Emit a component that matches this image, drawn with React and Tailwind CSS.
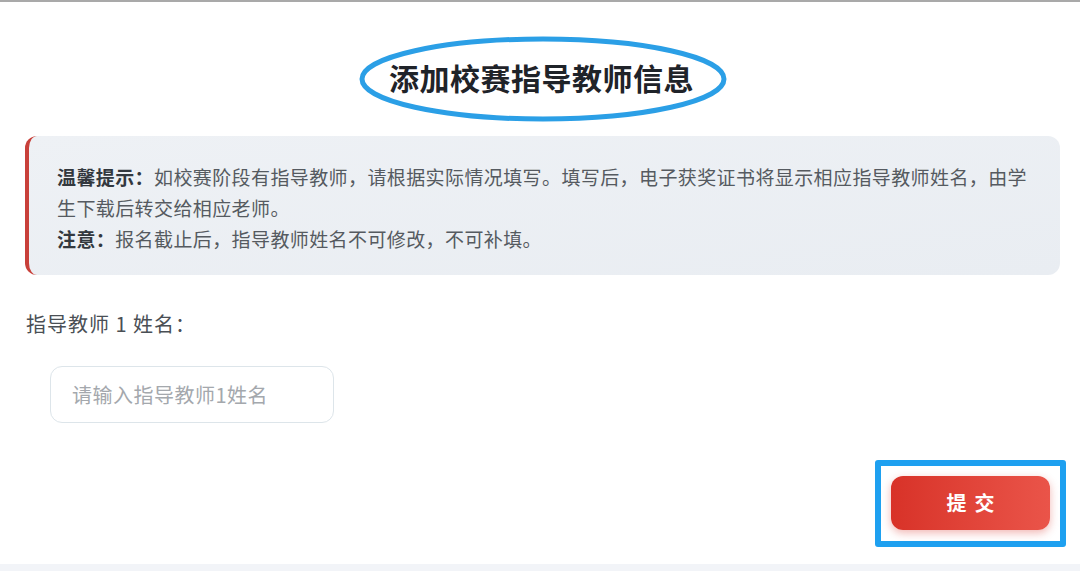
import React from "react";

const cjk = { fontFamily: '"Noto Sans CJK SC", "Noto Sans", sans-serif' };

function App() {
  return (
    <div className="w-[1080px] h-[571px] bg-white border-t-2 border-[#a9a9a9] flex flex-col overflow-hidden" style={cjk}>
      <div className="flex justify-center pt-[55px]">
        <div className="relative">
          <h1 className="text-[30px] leading-[40px] font-bold text-[#1f2329] tracking-[0.5px] pl-[3px]">添加校赛指导教师信息</h1>
          {/* annotation ellipse */}
          <svg className="absolute left-[-28px] top-[-22px] pointer-events-none" width="370" height="88" viewBox="0 0 370 88">
            <ellipse cx="185" cy="44" rx="181" ry="40" fill="none" stroke="#2b9fe6" strokeWidth="5" />
          </svg>
        </div>
      </div>

      <div className="ml-[25px] mr-[20px] mt-[39px] rounded-xl border-l-4 border-[#c8403a] bg-gradient-to-br from-[#eef1f5] to-[#e9edf2] pl-7 pr-[30px] pt-[25px] pb-[21px] text-[19px] leading-[31px] tracking-[0.4px] text-[#555a60]">
        <p>
          <span className="font-bold text-[#33383e]">温馨提示：</span>
          如校赛阶段有指导教师，请根据实际情况填写。填写后，电子获奖证书将显示相应指导教师姓名，由学生下载后转交给相应老师。
        </p>
        <p>
          <span className="font-bold text-[#33383e]">注意：</span>
          报名截止后，指导教师姓名不可修改，不可补填。
        </p>
      </div>

      <label className="mt-[36px] ml-[26px] text-[20px] leading-[26px] tracking-[1px] text-[#4a4f55]">指导教师 1 姓名：</label>

      <div className="mt-[29px] ml-[50px]">
        <input
          className="w-[284px] h-[57px] rounded-xl border border-[#dde5ea] bg-white px-[21px] text-[20px] tracking-[0.5px] text-[#333] placeholder:text-[#a4a8ad] outline-none"
          placeholder="请输入指导教师1姓名"
          style={cjk}
        />
      </div>

      <div className="flex justify-end mt-[37px] pr-[14px]">
        <div className="border-[6px] border-[#1ea0f0] rounded-[3px] px-[10px] pt-[10px] pb-[11px]">
          <button className="w-[159px] h-[54px] rounded-xl bg-gradient-to-r from-[#d83228] to-[#ea5449] text-white text-[20px] font-bold tracking-[8px] shadow-[0_3px_8px_rgba(216,50,40,0.35)]" style={cjk}>
            <span className="pl-[8px]">提交</span>
          </button>
        </div>
      </div>

      <div className="mt-auto h-[7px] bg-[#f2f4f8]" />
    </div>
  );
}

export default App;
